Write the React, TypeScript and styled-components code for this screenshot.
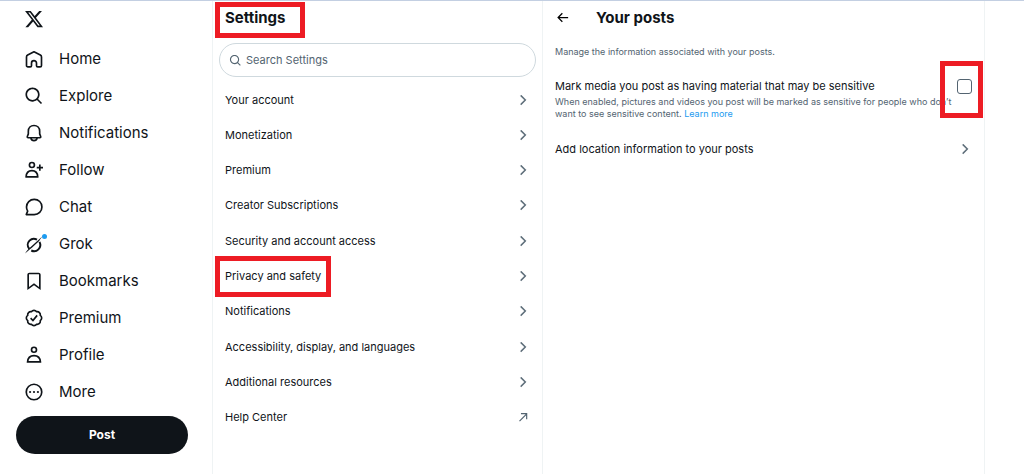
import React from "react";
import styled, { createGlobalStyle, css } from "styled-components";

const GlobalStyle = createGlobalStyle`
  *, *::before, *::after { box-sizing: border-box; }
  body {
    margin: 0;
    background: #fff;
    color: #0f1419;
    font-family: Inter, "Liberation Sans", sans-serif;
  }
  a { color: inherit; text-decoration: none; }
  ul { list-style: none; margin: 0; padding: 0; }
  h1, h2, p { margin: 0; }
`;

const ink = "#0f1419";
const muted = "#536471";
const line = "#eff3f4";

/* Red callout frame laid over the element it points at. */
const callout = css`
  position: relative;
  &::after {
    content: "";
    position: absolute;
    border: 5px solid #ed1c24;
    pointer-events: none;
  }
`;

const Page = styled.div`
  display: grid;
  grid-template-columns: 212px minmax(0, 330fr) minmax(0, 443fr) 39px;
  min-height: 100vh;
  border-top: 1px solid #c3cfe2;
`;

const Sidebar = styled.header`
  display: flex;
  flex-direction: column;
  padding: 8px 24px 16px 16px;
`;

const Logo = styled.a`
  display: flex;
  padding-left: 8px;
  margin-bottom: 11px;
`;

const NavItem = styled.a`
  display: flex;
  align-items: center;
  gap: 15px;
  height: 37px;
  padding-left: 8px;
  font-size: 15px;
  line-height: 20px;
`;

const IconBox = styled.span`
  position: relative;
  display: flex;
`;

const Dot = styled.span`
  position: absolute;
  top: 0;
  right: -3px;
  width: 5px;
  height: 5px;
  border-radius: 50%;
  background: #1d9bf0;
`;

const PostButton = styled.button`
  height: 38px;
  margin-top: 6px;
  border: 0;
  border-radius: 19px;
  background: ${ink};
  color: #fff;
  font: 700 12px/20px Inter, "Liberation Sans", sans-serif;
`;

const Column = styled.section<{ $last?: boolean }>`
  border-left: 1px solid ${line};
  border-right: ${(p) => (p.$last ? `1px solid ${line}` : "0")};
`;

const TitleBar = styled.div`
  display: flex;
  align-items: center;
  height: 33px;
  padding: 0 12px;
`;

const Title = styled.h2<{ $marked?: boolean }>`
  font-size: 15px;
  line-height: 20px;
  font-weight: 700;
  ${(p) =>
    p.$marked &&
    css`
      ${callout}
      &::after { inset: -6px -19px -10px -10px; }
    `}
`;

const BackButton = styled.button`
  display: flex;
  padding: 0;
  margin-right: 26px;
  border: 0;
  background: none;
`;

const SearchBox = styled.label`
  display: flex;
  align-items: center;
  gap: 4px;
  height: 34px;
  margin: 9px 6px 5px;
  padding: 0 9px;
  border: 1px solid #cfd9de;
  border-radius: 17px;
  color: ${muted};
`;

const SearchInput = styled.input`
  flex: 1;
  min-width: 0;
  padding: 0;
  border: 0;
  outline: 0;
  background: none;
  font: 400 11px/16px Inter, "Liberation Sans", sans-serif;
  &::placeholder { color: ${muted}; opacity: 1; }
`;

const List = styled.ul`
  display: flex;
  flex-direction: column;
  justify-content: space-between;
  min-height: 353px;
`;

const RowLink = styled.a`
  display: flex;
  align-items: center;
  justify-content: space-between;
  height: 35px;
  padding: 0 12px;
  font-size: 11px;
  line-height: 16px;
  svg { color: ${muted}; }
`;

const RowText = styled.span<{ $marked?: boolean }>`
  ${(p) =>
    p.$marked &&
    css`
      ${callout}
      &::after { inset: -12px -10px -13px -10px; }
    `}
`;

const Intro = styled.p`
  padding: 12px 12px 0;
  color: ${muted};
  font-size: 9px;
  line-height: 12px;
`;

const Setting = styled.div`
  padding: 20px 12px 11px;
`;

const SettingHead = styled.div`
  display: flex;
  align-items: center;
  justify-content: space-between;
  margin-bottom: 2px;
  font-size: 11px;
  line-height: 16px;
`;

const CheckFrame = styled.span`
  display: flex;
  ${callout}
  &::after { inset: -18px -11px -24px -17px; }
`;

const Checkbox = styled.input`
  appearance: none;
  width: 15px;
  height: 15px;
  margin: 0;
  border: 1px solid ${muted};
  border-radius: 3px;
`;

const Description = styled.p`
  color: ${muted};
  font-size: 9px;
  line-height: 12px;
  a { color: #1d9bf0; }
`;

type IconProps = { size?: number; children: React.ReactNode };

const Solid = ({ size = 20, children }: IconProps) => (
  <svg width={size} height={size} viewBox="0 0 24 24" fill="currentColor" aria-hidden="true">
    {children}
  </svg>
);

const Stroke = ({ size = 20, children }: IconProps) => (
  <svg width={size} height={size} viewBox="0 0 24 24" fill="none" stroke="currentColor" strokeWidth="2" aria-hidden="true">
    {children}
  </svg>
);

const searchPath =
  "M10.25 3.75c-3.59 0-6.5 2.91-6.5 6.5s2.91 6.5 6.5 6.5c1.795 0 3.419-.726 4.596-1.904 1.178-1.177 1.904-2.801 1.904-4.596 0-3.59-2.91-6.5-6.5-6.5zm-8.5 6.5c0-4.694 3.806-8.5 8.5-8.5s8.5 3.806 8.5 8.5c0 1.986-.682 3.815-1.824 5.262l4.781 4.781-1.414 1.414-4.781-4.781c-1.447 1.142-3.276 1.824-5.262 1.824-4.694 0-8.5-3.806-8.5-8.5z";

const Chevron = () => (
  <Solid size={14}>
    <path
      d="M14.586 12L7.543 4.96l1.414-1.42L17.414 12l-8.457 8.46-1.414-1.42L14.586 12z"
      stroke="currentColor"
      strokeWidth="0.6"
    />
  </Solid>
);

const External = () => (
  <Stroke size={14}>
    <path d="M6 19L18 7M8.500 6.200h9.800V16" />
  </Stroke>
);

const nav: { label: string; icon: React.ReactNode; dot?: boolean }[] = [
  {
    label: "Home",
    icon: (
      <Stroke>
        <path
          d="M12 3.300l7.600 3.900c.9.500 1.400 1.300 1.400 2.300v10.300c0 1-.7 1.700-1.700 1.700h-2.800c-.9 0-1.500-.6-1.500-1.500v-3c0-1.700-1.300-3-3-3s-3 1.300-3 3v3c0 .9-.6 1.500-1.500 1.500H4.700c-1 0-1.700-.7-1.700-1.700V9.500c0-1 .5-1.800 1.400-2.300z"
          strokeLinejoin="round"
        />
      </Stroke>
    ),
  },
  { label: "Explore", icon: <Solid><path d={searchPath} /></Solid> },
  {
    label: "Notifications",
    icon: (
      <Stroke>
        <path
          d="M12 3C8 3 5.200 6 5.200 9.800v3.200L4 16.200c-.3.900.1 1.500 1 1.500h14c.9 0 1.300-.6 1-1.500L18.800 13V9.800C18.800 6 16 3 12 3z"
          strokeLinejoin="round"
        />
        <path d="M8.200 18c.5 2 1.900 3.200 3.800 3.200s3.300-1.200 3.800-3.200" />
      </Stroke>
    ),
  },
  {
    label: "Follow",
    icon: (
      <Stroke>
        <circle cx="9.500" cy="6" r="3" />
        <path d="M2.500 20.300c.2-4.700 2.800-7.600 7-7.600s6.800 2.900 7 7.600z" strokeLinejoin="round" />
        <path d="M19 5.500v7.500M15.300 9.200h7.500" />
      </Stroke>
    ),
  },
  {
    label: "Chat",
    icon: (
      <Stroke>
        <path
          d="M12.300 2.800c5.200 0 9.200 4 9.200 9.100s-4 9.200-9.200 9.200H2.700l1.700-4.200c-.9-1.500-1.400-3.200-1.400-5 0-5.100 4.100-9.100 9.300-9.100z"
          strokeLinejoin="round"
        />
      </Stroke>
    ),
  },
  {
    label: "Grok",
    dot: true,
    icon: (
      <Stroke>
        <path d="M6.300 17.800c-2.600-3-2.300-7.300.3-9.900 2.400-2.400 6-2.800 9-1.100" strokeWidth="2.400" />
        <path d="M18.600 9.500c1.600 3.200 1 6.700-1.300 9-2.300 2.300-5.700 2.700-8.600 1.300" strokeWidth="2.400" />
        <path d="M1.200 23.500c1.500-2.300 3-4.200 4.800-6L22.500 2.500c-2.200 2.600-3.400 4.200-4.300 6l-8.400 7.600-3 2.500c-1.900 1.500-3.500 3-5.600 4.900z" fill="currentColor" stroke="none" />
      </Stroke>
    ),
  },
  {
    label: "Bookmarks",
    icon: (
      <Solid>
        <path d="M4 4.500C4 3.120 5.119 2 6.500 2h11C18.881 2 20 3.120 20 4.500v18.440l-8-5.710-8 5.710V4.500zM6.500 4c-.276 0-.5.220-.5.500v14.560l6-4.290 6 4.290V4.500c0-.280-.224-.5-.5-.5h-11z" />
      </Solid>
    ),
  },
  {
    label: "Premium",
    icon: (
      <Stroke>
        <g transform="translate(1.200 1.200) scale(.9)" strokeWidth="2.200">
          <path d="M8.520 3.590c.8-1.100 2.040-1.840 3.480-1.840s2.680.740 3.490 1.840c1.340-.210 2.740.140 3.760 1.160s1.370 2.420 1.160 3.770c1.100.8 1.840 2.040 1.840 3.480s-.740 2.680-1.840 3.480c.210 1.340-.140 2.750-1.160 3.770s-2.420 1.370-3.760 1.160c-.8 1.100-2.050 1.840-3.490 1.840s-2.680-.740-3.480-1.840c-1.340.210-2.750-.140-3.770-1.160-1.010-1.020-1.370-2.420-1.160-3.770-1.090-.8-1.840-2.040-1.840-3.480s.750-2.680 1.840-3.480c-.210-1.350.140-2.750 1.160-3.770s2.430-1.370 3.770-1.160z" />
          <path d="M7.500 12.200l3.100 3.100 5.600-6.800" />
        </g>
      </Stroke>
    ),
  },
  {
    label: "Profile",
    icon: (
      <Stroke>
        <circle cx="12" cy="5.700" r="3" />
        <path d="M4.300 20.300c.3-4.700 3.200-7.600 7.700-7.600s7.400 2.900 7.700 7.600z" />
      </Stroke>
    ),
  },
  {
    label: "More",
    icon: (
      <Stroke>
        <circle cx="12" cy="12" r="9.300" />
        <g fill="currentColor" stroke="none">
          <circle cx="7.300" cy="12" r="1.300" />
          <circle cx="12" cy="12" r="1.300" />
          <circle cx="16.700" cy="12" r="1.300" />
        </g>
      </Stroke>
    ),
  },
];

const settings: { label: string; marked?: boolean; external?: boolean }[] = [
  { label: "Your account" },
  { label: "Monetization" },
  { label: "Premium" },
  { label: "Creator Subscriptions" },
  { label: "Security and account access" },
  { label: "Privacy and safety", marked: true },
  { label: "Notifications" },
  { label: "Accessibility, display, and languages" },
  { label: "Additional resources" },
  { label: "Help Center", external: true },
];

export default function App() {
  return (
    <>
      <GlobalStyle />
      <Page>
        <Sidebar>
          <Logo href="#" aria-label="X">
            <Solid>
              <path d="M18.244 2.250h3.308l-7.227 8.260 8.502 11.240H16.170l-5.214-6.817L4.990 21.750H1.680l7.730-8.835L1.254 2.250H8.080l4.713 6.231zm-1.161 17.520h1.833L7.084 4.126H5.117z" />
            </Solid>
          </Logo>
          <nav aria-label="Primary">
            {nav.map((item) => (
              <NavItem href="#" key={item.label}>
                <IconBox>
                  {item.icon}
                  {item.dot && <Dot />}
                </IconBox>
                {item.label}
              </NavItem>
            ))}
          </nav>
          <PostButton type="button">Post</PostButton>
        </Sidebar>

        <Column>
          <TitleBar>
            <Title $marked>Settings</Title>
          </TitleBar>
          <SearchBox>
            <Solid size={13}><path d={searchPath} /></Solid>
            <SearchInput type="text" placeholder="Search Settings" aria-label="Search Settings" />
          </SearchBox>
          <List>
            {settings.map((row) => (
              <li key={row.label}>
                <RowLink href="#">
                  <RowText $marked={row.marked}>{row.label}</RowText>
                  {row.external ? <External /> : <Chevron />}
                </RowLink>
              </li>
            ))}
          </List>
        </Column>

        <Column $last>
          <TitleBar>
            <BackButton type="button" aria-label="Back">
              <Solid size={15}>
                <path d="M7.414 13l5.043 5.040-1.414 1.420L3.586 12l7.457-7.460 1.414 1.420L7.414 11H21v2H7.414z" />
              </Solid>
            </BackButton>
            <Title>Your posts</Title>
          </TitleBar>
          <Intro>Manage the information associated with your posts.</Intro>
          <Setting>
            <SettingHead>
              <label htmlFor="sensitive">Mark media you post as having material that may be sensitive</label>
              <CheckFrame>
                <Checkbox type="checkbox" id="sensitive" />
              </CheckFrame>
            </SettingHead>
            <Description>
              When enabled, pictures and videos you post will be marked as sensitive for people who don’t want to see
              sensitive content. <a href="#">Learn more</a>
            </Description>
          </Setting>
          <RowLink href="#">
            <RowText>Add location information to your posts</RowText>
            <Chevron />
          </RowLink>
        </Column>
      </Page>
    </>
  );
}
